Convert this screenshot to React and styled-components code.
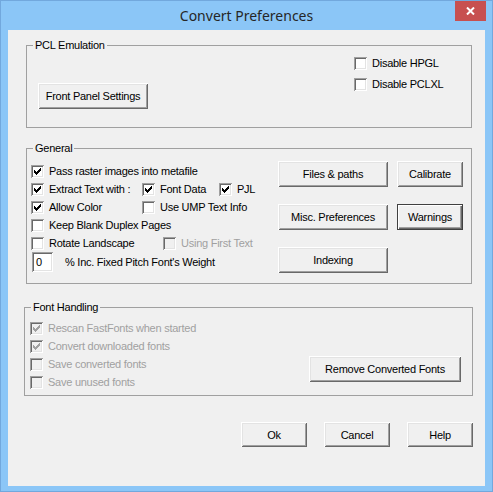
import styled, { createGlobalStyle } from 'styled-components';

const GlobalStyle = createGlobalStyle`
  html, body {
    margin: 0;
    padding: 0;
    background: #ffffff;
  }
  body {
    font-family: 'Liberation Sans', Arial, sans-serif;
    font-size: 11px;
    letter-spacing: -0.25px;
    color: #000;
  }
`;

const Window = styled.div`
  width: 493px;
  height: 492px;
  box-sizing: border-box;
  background: #8bc6f7;
  border: 1px solid #72a8dd;
  padding: 0 7px 5px;
  display: flex;
  flex-direction: column;
`;

const TitleBar = styled.div`
  height: 29px;
  margin: 0 -7px;
  display: grid;
  grid-template-columns: 1fr auto 1fr;
  align-items: start;
`;

const Title = styled.div`
  grid-column: 2;
  height: 29px;
  line-height: 30px;
  font-family: 'Noto Sans', 'Open Sans', sans-serif;
  font-size: 14px;
  letter-spacing: 0;
  color: #262626;
`;

const CloseButton = styled.div`
  grid-column: 3;
  justify-self: end;
  width: 31px;
  height: 20px;
  margin-right: 6px;
  background: #c75050;
  display: flex;
  align-items: center;
  justify-content: center;
`;

const Client = styled.div`
  width: 477px;
  height: 456px;
  background: #f0f0f0;
  display: flex;
  flex-direction: column;
  align-items: flex-start;
`;

const Group = styled.section`
  position: relative;
  box-sizing: border-box;
  margin: ${p => p.$top}px 0 0 ${p => p.$left}px;
  width: ${p => p.$width}px;
  height: ${p => p.$height}px;
  border: 1px solid #a0a0a0;
  display: flex;
`;

const GroupLabel = styled.span`
  position: absolute;
  top: -7px;
  left: 6px;
  padding: 0 2px;
  line-height: 13px;
  background: #f0f0f0;
`;

const Button = styled.div`
  box-sizing: border-box;
  width: ${p => p.$w}px;
  height: ${p => p.$h || 26}px;
  background: #f0f0f0;
  display: flex;
  align-items: center;
  justify-content: center;
  box-shadow: ${p =>
    p.$default
      ? 'inset 1px 1px 0 #404040, inset -1px -1px 0 #404040, inset 2px 2px 0 #fff, inset -2px -2px 0 #696969, inset -3px -3px 0 #a0a0a0'
      : 'inset 1px 1px 0 #fff, inset -1px -1px 0 #696969, inset 2px 2px 0 #e3e3e3, inset -2px -2px 0 #a0a0a0'};
`;

const Row = styled.div`
  display: flex;
  align-items: flex-start;
  height: ${p => p.$h || 18}px;
`;

const Cell = styled.div`
  width: ${p => p.$w}px;
  flex: none;
`;

const CheckLabel = styled.label`
  display: flex;
  align-items: flex-start;
  gap: 5px;
  height: ${p => p.$h || 18}px;
  line-height: ${p => p.$h || 18}px;
  white-space: nowrap;
  color: ${p => (p.$disabled ? '#a0a0a0' : '#000')};
`;

const Box = styled.span`
  flex: none;
  width: 13px;
  height: 13px;
  margin-top: ${p => p.$offset}px;
  background: ${p => (p.$disabled ? '#f0f0f0' : '#fff')};
  box-shadow: inset 1px 1px 0 #a0a0a0, inset -1px -1px 0 #fff,
    inset 2px 2px 0 #696969, inset -2px -2px 0 #e3e3e3;
  svg {
    display: block;
  }
`;

const checkPath = [2, 3, 4, 3, 2, 1, 0]
  .map((s, c) => `M${3 + c} ${3 + s}h1v3h-1z`)
  .join('');

const Check = ({ label, checked, disabled, h = 18 }) => (
  <CheckLabel $disabled={disabled} $h={h}>
    <Box $disabled={disabled} $offset={Math.round((h - 13) / 2)}>
      {checked && (
        <svg width="13" height="13" viewBox="0 0 13 13" shapeRendering="crispEdges">
          <path d={checkPath} fill={disabled ? '#a0a0a0' : '#000'} />
        </svg>
      )}
    </Box>
    <span>{label}</span>
  </CheckLabel>
);

const PclBody = styled.div`
  display: flex;
  flex: 1;
  padding: 7px 0 0 11px;
`;

const PclOptions = styled.div`
  margin-left: auto;
  width: 117px;
`;

const LeftColumn = styled.div`
  padding: ${p => p.$top}px 0 0 ${p => p.$left}px;
`;

const ButtonGrid = styled.div`
  margin: 12px 8px 0 auto;
  display: grid;
  grid-template-columns: 110px 66px;
  grid-auto-rows: 26px;
  column-gap: 9px;
  row-gap: 17px;
  align-self: flex-start;
`;

const FieldRow = styled.div`
  display: flex;
  align-items: center;
  height: 20px;
  gap: 12px;
  padding-left: 1px;
`;

const NumberField = styled.div`
  box-sizing: border-box;
  width: 21px;
  height: 20px;
  padding-left: 4px;
  line-height: 20px;
  background: #fff;
  box-shadow: inset 1px 1px 0 #a0a0a0, inset -1px -1px 0 #fff,
    inset 2px 2px 0 #696969, inset -2px -2px 0 #e3e3e3;
`;

const FontButtonSlot = styled.div`
  margin: 48px 11px 0 auto;
`;

const Footer = styled.div`
  align-self: stretch;
  margin-top: 26px;
  padding-right: 12px;
  display: flex;
  justify-content: flex-end;
  gap: 17px;
`;

const App = () => (
  <>
    <GlobalStyle />
    <Window>
      <TitleBar>
        <Title>Convert Preferences</Title>
        <CloseButton>
          <svg width="9" height="8" viewBox="0 0 9 8">
            <path d="M1 0.5 L8 7.5 M8 0.5 L1 7.5" stroke="#fff" strokeWidth="2" />
          </svg>
        </CloseButton>
      </TitleBar>
      <Client>
        <Group $top={15} $left={18} $width={446} $height={83}>
          <GroupLabel>PCL Emulation</GroupLabel>
          <PclBody>
            <div style={{ marginTop: 30 }}>
              <Button $w={110}>Front Panel Settings</Button>
            </div>
            <PclOptions>
              <Check label="Disable HPGL" h={21} />
              <Check label="Disable PCLXL" h={21} />
            </PclOptions>
          </PclBody>
        </Group>

        <Group $top={20} $left={18} $width={446} $height={136}>
          <GroupLabel>General</GroupLabel>
          <LeftColumn $top={13} $left={4}>
            <Row>
              <Check label="Pass raster images into metafile" checked />
            </Row>
            <Row>
              <Cell $w={111}>
                <Check label="Extract Text with :" checked />
              </Cell>
              <Cell $w={77}>
                <Check label="Font Data" checked />
              </Cell>
              <Check label="PJL" checked />
            </Row>
            <Row>
              <Cell $w={111}>
                <Check label="Allow Color" checked />
              </Cell>
              <Check label="Use UMP Text Info" />
            </Row>
            <Row>
              <Check label="Keep Blank Duplex Pages" />
            </Row>
            <Row>
              <Cell $w={132}>
                <Check label="Rotate Landscape" />
              </Cell>
              <Check label="Using First Text" disabled />
            </Row>
            <FieldRow>
              <NumberField>0</NumberField>
              <span>% Inc. Fixed Pitch Font's Weight</span>
            </FieldRow>
          </LeftColumn>
          <ButtonGrid>
            <Button $w={110}>Files &amp; paths</Button>
            <Button $w={66}>Calibrate</Button>
            <Button $w={110}>Misc. Preferences</Button>
            <Button $w={66} $default>Warnings</Button>
            <Button $w={110}>Indexing</Button>
          </ButtonGrid>
        </Group>

        <Group $top={23} $left={16} $width={449} $height={89}>
          <GroupLabel>Font Handling</GroupLabel>
          <LeftColumn $top={11} $left={5}>
            <Check label="Rescan FastFonts when started" checked disabled />
            <Check label="Convert downloaded fonts" checked disabled />
            <Check label="Save converted fonts" disabled />
            <Check label="Save unused fonts" disabled />
          </LeftColumn>
          <FontButtonSlot>
            <Button $w={152}>Remove Converted Fonts</Button>
          </FontButtonSlot>
        </Group>

        <Footer>
          <Button $w={66} $h={25}>Ok</Button>
          <Button $w={66} $h={25}>Cancel</Button>
          <Button $w={66} $h={25}>Help</Button>
        </Footer>
      </Client>
    </Window>
  </>
);

export default App;
